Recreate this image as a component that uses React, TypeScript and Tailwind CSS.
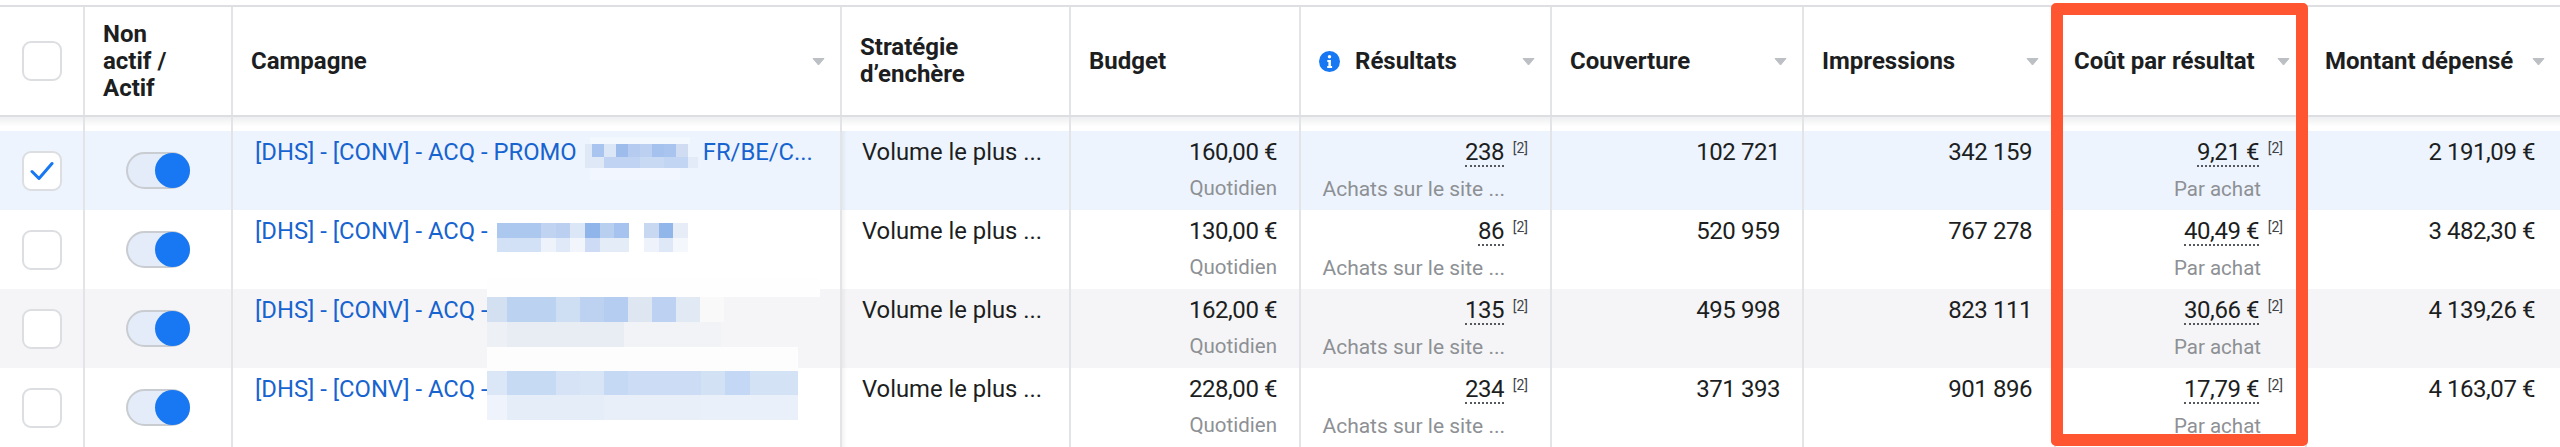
import type { ReactNode } from "react";

const COLS =
  "grid grid-cols-[85px_148px_609px_229px_230px_251px_252px_252px_251px_253px]";
const CELL = "border-r-2 border-[#e2e4e7]";

type Row = {
  bg: string;
  checked?: boolean;
  head: string;
  tail?: string;
  budget: string;
  results: string;
  reach: string;
  impressions: string;
  cost: string;
  spent: string;
};

const ROWS: Row[] = [
  {
    bg: "bg-[#edf4fe]",
    checked: true,
    head: "[DHS] - [CONV] - ACQ - PROMO",
    tail: "FR/BE/C...",
    budget: "160,00 €",
    results: "238",
    reach: "102 721",
    impressions: "342 159",
    cost: "9,21 €",
    spent: "2 191,09 €",
  },
  {
    bg: "bg-white",
    head: "[DHS] - [CONV] - ACQ -",
    budget: "130,00 €",
    results: "86",
    reach: "520 959",
    impressions: "767 278",
    cost: "40,49 €",
    spent: "3 482,30 €",
  },
  {
    bg: "bg-[#f5f5f7]",
    head: "[DHS] - [CONV] - ACQ -",
    budget: "162,00 €",
    results: "135",
    reach: "495 998",
    impressions: "823 111",
    cost: "30,66 €",
    spent: "4 139,26 €",
  },
  {
    bg: "bg-white",
    head: "[DHS] - [CONV] - ACQ -",
    budget: "228,00 €",
    results: "234",
    reach: "371 393",
    impressions: "901 896",
    cost: "17,79 €",
    spent: "4 163,07 €",
  },
];

// blurred campaign names: [left, top, height, [width, colour]...]
type Strip = { x: number; y: number; h: number; cells: [number, string][] };

const BLUR: Strip[] = [
  { x: 590, y: 137, h: 7, cells: [[100, "#f3f7fe"]] },
  {
    x: 585,
    y: 144,
    h: 13,
    cells: [
      [7, "#dfe8f6"],
      [12, "#a9c4ee"],
      [12, "#dbe6f6"],
      [12, "#9dbcec"],
      [12, "#b5cbef"],
      [12, "#bcd1f2"],
      [12, "#a5c1ee"],
      [12, "#a9c4ee"],
      [12, "#cfdcf2"],
    ],
  },
  {
    x: 585,
    y: 157,
    h: 11,
    cells: [
      [19, "#dfe8f6"],
      [36, "#c0d3f2"],
      [24, "#c8d9f3"],
      [24, "#c2d5f2"],
      [10, "#e3ebf8"],
    ],
  },
  { x: 590, y: 168, h: 12, cells: [[90, "#f2f6fe"]] },
  {
    x: 497,
    y: 223,
    h: 15,
    cells: [
      [44, "#adc8ee"],
      [15, "#c0d4f2"],
      [14, "#bbd0f1"],
      [15, "#dbe6f6"],
      [15, "#8fb5ea"],
      [14, "#b9cff0"],
      [15, "#a5c3ee"],
      [15, "#ffffff"],
      [15, "#c7d8f0"],
      [14, "#90b6ea"],
      [15, "#e6edf7"],
    ],
  },
  {
    x: 497,
    y: 238,
    h: 14,
    cells: [
      [44, "#d3e1f7"],
      [15, "#eef3fb"],
      [14, "#e0e9f7"],
      [15, "#f2f5fb"],
      [15, "#cddcf4"],
      [29, "#e4ecf8"],
      [15, "#ffffff"],
      [15, "#eef3fb"],
      [14, "#dfe8f7"],
      [15, "#f4f7fc"],
    ],
  },
  { x: 487, y: 278, h: 19, cells: [[333, "#fdfefd"]] },
  {
    x: 487,
    y: 297,
    h: 25,
    cells: [
      [20, "#d3e0f2"],
      [49, "#bcd2f1"],
      [24, "#cfdff3"],
      [24, "#bdd2f1"],
      [24, "#b4cdf0"],
      [24, "#dde6f1"],
      [24, "#bdd2f2"],
      [24, "#e0e9f4"],
      [24, "#f9f9fa"],
    ],
  },
  {
    x: 487,
    y: 322,
    h: 25,
    cells: [
      [20, "#edf0f5"],
      [117, "#e8edf4"],
      [97, "#f1f3f6"],
    ],
  },
  { x: 487, y: 347, h: 24, cells: [[311, "#fdfdfd"]] },
  {
    x: 487,
    y: 371,
    h: 24,
    cells: [
      [20, "#dbe6f6"],
      [49, "#c7daf4"],
      [24, "#d6e3f6"],
      [24, "#d8e5f6"],
      [24, "#c6d9f4"],
      [73, "#cbdcf4"],
      [24, "#d3e1f5"],
      [25, "#c4d8f5"],
      [48, "#d4e2f5"],
    ],
  },
  {
    x: 487,
    y: 395,
    h: 25,
    cells: [
      [20, "#eff4fc"],
      [97, "#e5edf9"],
      [97, "#e8eff9"],
      [97, "#e9f0fa"],
    ],
  },
];

function SortArrow() {
  return (
    <svg width="13" height="9" viewBox="0 0 13 9" className="shrink-0">
      <path d="M1 1.5h11L6.5 8z" fill="#bcc0c4" stroke="#bcc0c4" strokeLinejoin="round" />
    </svg>
  );
}

function InfoIcon() {
  return (
    <svg width="21" height="21" viewBox="0 0 21 21" className="shrink-0">
      <circle cx="10.5" cy="10.5" r="10.5" fill="#1877f2" />
      <circle cx="10.5" cy="5.8" r="1.7" fill="#fff" />
      <path d="M8.3 9h3.6v6h1.2v1.9H8.2V15h1.2v-4.1H8.3z" fill="#fff" />
    </svg>
  );
}

function Checkbox({ checked }: { checked?: boolean }) {
  return (
    <div className="flex h-[40px] w-[40px] items-center justify-center rounded-[9px] border-2 border-[#dcdee1] bg-white">
      {checked && (
        <svg width="24" height="20" viewBox="0 0 24 20">
          <path
            d="M2 10.5l7 7L22 2.5"
            fill="none"
            stroke="#1877f2"
            strokeWidth="3"
            strokeLinecap="round"
            strokeLinejoin="round"
          />
        </svg>
      )}
    </div>
  );
}

function Toggle() {
  return (
    <div className="flex h-[37px] w-[64px] items-center justify-end rounded-full border-2 border-[#c9ccd1] bg-[#e3ecf8]">
      <div className="-mr-[2px] h-[35px] w-[35px] rounded-full bg-[#1877f2]" />
    </div>
  );
}

function Head({ children, arrow = true }: { children: ReactNode; arrow?: boolean }) {
  return (
    <div className={`${CELL} flex items-center justify-between pl-[18px] pr-[15px] text-[24px] font-bold leading-[27px] text-[#1c1e21]`}>
      {children}
      {arrow && <SortArrow />}
    </div>
  );
}

function Metric({ value, sup, sub, subClass }: { value: string; sup?: boolean; sub?: string; subClass?: string }) {
  return (
    <div className={`${CELL} flex flex-col items-end pr-[22px] pt-[8px] text-[24px] leading-[27px] tracking-[-0.45px] text-[#1c1e21]`}>
      <div className="flex items-start whitespace-nowrap">
        {sup ? (
          <>
            <span className="border-b-2 border-dotted border-[#55585c] leading-[26px]">{value}</span>
            <span className="ml-[6px] mt-[1px] w-[18px] text-right text-[14px] leading-[16px] tracking-normal text-[#3f4246]">[2]</span>
          </>
        ) : (
          value
        )}
      </div>
      {sub && <div className={`mt-[10px] whitespace-nowrap leading-[25px] tracking-normal text-[#8d9094] ${subClass ?? ""}`}>{sub}</div>}
    </div>
  );
}

export default function App() {
  return (
    <div className="relative h-[447px] w-[2560px] overflow-hidden bg-white [font-family:Roboto,sans-serif]">
      <div className="h-[5px]" />
      <div className="h-[2px] bg-[#dddfe2]" />

      {/* header */}
      <div className={`${COLS} h-[110px] border-b-2 border-[#dcdee1]`}>
        <div className={`${CELL} flex items-center justify-center`}>
          <Checkbox />
        </div>
        <div className={`${CELL} flex items-center pl-[18px] text-[24px] font-bold leading-[27px] text-[#1c1e21]`}>
          <div>
            Non
            <br />
            actif /
            <br />
            Actif
          </div>
        </div>
        <Head>Campagne</Head>
        <Head arrow={false}>
          <div>
            Stratégie
            <br />
            d’enchère
          </div>
        </Head>
        <Head arrow={false}>Budget</Head>
        <Head>
          <div className="flex items-center gap-[15px]">
            <InfoIcon />
            Résultats
          </div>
        </Head>
        <Head>Couverture</Head>
        <Head>Impressions</Head>
        <Head>Coût par résultat</Head>
        <div className="flex items-center justify-between pl-[18px] pr-[15px] text-[24px] font-bold leading-[27px] text-[#1c1e21]">
          Montant dépensé
          <SortArrow />
        </div>
      </div>

      {/* scrolled gap under the sticky header */}
      <div className={`${COLS} h-[14px] bg-gradient-to-b from-[#eeeff0] to-white to-70%`}>
        {Array.from({ length: 9 }, (_, i) => (
          <div key={i} className={CELL} />
        ))}
      </div>

      {ROWS.map((r) => (
        <div key={r.budget} className={`${COLS} h-[79px] ${r.bg}`}>
          <div className={`${CELL} flex items-center justify-center`}>
            <Checkbox checked={r.checked} />
          </div>
          <div className={`${CELL} flex items-center justify-center`}>
            <Toggle />
          </div>
          <div className={`${CELL} flex items-start whitespace-nowrap pl-[22px] pt-[8px] text-[23.8px] leading-[27px] text-[#1763cf]`}>
            <span>{r.head}</span>
            {r.tail && <span className="ml-[126px]">{r.tail}</span>}
          </div>
          <div className={`${CELL} pl-[20px] pt-[8px] text-[23.8px] leading-[27px] text-[#1c1e21] shadow-[inset_5px_0_4px_-3px_rgba(0,0,0,0.06)]`}>
            Volume le plus ...
          </div>
          <Metric value={r.budget} sub="Quotidien" subClass="text-[20.5px]" />
          <Metric value={r.results} sup sub="Achats sur le site ..." subClass="mr-[23px] text-[21px]" />
          <Metric value={r.reach} />
          <Metric value={r.impressions} />
          <Metric value={r.cost} sup sub="Par achat" subClass="mr-[22px] text-[20.5px]" />
          <div className="flex flex-col items-end pr-[25px] pt-[8px] text-[24px] leading-[27px] tracking-[-0.45px] text-[#1c1e21]">{r.spent}</div>
        </div>
      ))}

      {/* blurred names */}
      {BLUR.map((s) => (
        <div key={`${s.x}-${s.y}`} className="absolute flex" style={{ left: s.x, top: s.y, height: s.h }}>
          {s.cells.map(([w, c], i) => (
            <div key={i} style={{ width: w, backgroundColor: c }} />
          ))}
        </div>
      ))}

      {/* highlight frame */}
      <div className="absolute left-[2051px] top-[3px] h-[443px] w-[257px] rounded-[5px] border-[12px] border-[#ff5530]" />
    </div>
  );
}
